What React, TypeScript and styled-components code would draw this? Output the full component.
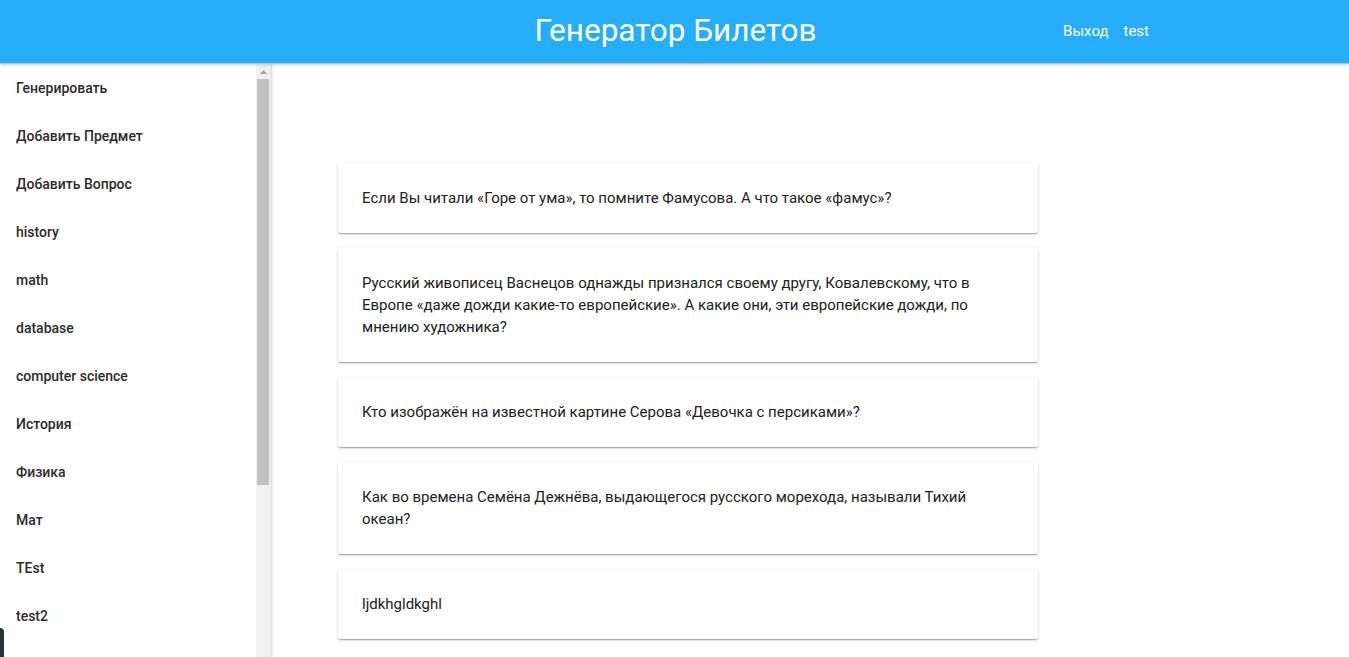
import React from "react";
import styled, { createGlobalStyle } from "styled-components";

const GlobalStyle = createGlobalStyle`
  html, body { margin: 0; padding: 0; height: 100%; overflow: hidden; }
  body { font-family: Roboto, "Noto Sans", Arial, sans-serif; background: #fff; }
  #root { height: 100%; }
  * { box-sizing: border-box; }
`;

const Page = styled.div`
  display: flex;
  flex-direction: column;
  height: 100vh;
  position: relative;
`;

const Header = styled.header`
  height: 64px;
  flex: 0 0 64px;
  background: #25aef7;
  border-bottom: 1px solid #b9c3c9;
  display: grid;
  grid-template-columns: 1fr auto 1fr;
  align-items: center;
  padding-bottom: 2px;
  box-shadow: 0 1px 3px rgba(0, 0, 0, 0.18);
  position: relative;
  z-index: 2;
`;

const Title = styled.h1`
  grid-column: 2;
  margin: 0;
  color: #fff;
  font-size: 31.5px;
  font-weight: 400;
  transform: translateX(1px);
`;

const Nav = styled.nav`
  grid-column: 3;
  display: flex;
  justify-content: flex-end;
  gap: 15px;
  padding-right: 200px;
`;

const NavLink = styled.a`
  color: #fff;
  font-size: 15px;
  text-decoration: none;
`;

const Body = styled.div`
  display: flex;
  flex: 1;
  min-height: 0;
`;

const Sidebar = styled.aside`
  width: 272px;
  flex: 0 0 272px;
  height: 100%;
  display: flex;
  background: #fff;
  border-right: 1px solid #e4e4e4;
  box-shadow: 1px 0 2px rgba(0, 0, 0, 0.08);
  position: relative;
  z-index: 1;
  overflow: hidden;
`;

const Menu = styled.ul`
  list-style: none;
  margin: 0;
  padding: 0;
  flex: 1;
`;

const MenuItem = styled.li`
  height: 48px;
  display: flex;
  align-items: center;
  padding-left: 16px;
  font-size: 14px;
  font-weight: 500;
  color: #2b2b2b;
`;

const ScrollTrack = styled.div`
  width: 15px;
  flex: 0 0 15px;
  background: #f1f1f1;
  display: flex;
  flex-direction: column;
  align-items: center;
  border-right: 1px solid #e6e6e6;
`;

const ScrollButton = styled.div`
  height: 15px;
  width: 100%;
  display: flex;
  align-items: center;
  justify-content: center;
`;

const ScrollThumb = styled.div`
  width: 12px;
  height: 406px;
  background: #c1c1c1;
`;

const Main = styled.main`
  flex: 1;
  overflow: hidden;
  padding: 99px 0 0 66px;
`;

const CardList = styled.div`
  width: 700px;
  display: flex;
  flex-direction: column;
  gap: 15px;
`;

const Card = styled.div`
  background: #fff;
  border-radius: 2px;
  padding: 24px;
  font-size: 15px;
  line-height: 22px;
  color: #212121;
  box-shadow: 0 1px 3px rgba(0, 0, 0, 0.2), 0 1px 1px rgba(0, 0, 0, 0.14), 0 2px 1px -1px rgba(0, 0, 0, 0.12);
`;

const CornerTab = styled.div`
  position: absolute;
  left: 0;
  bottom: 0;
  width: 4px;
  height: 29px;
  background: #263238;
  border-top-right-radius: 4px;
  z-index: 3;
`;

const menu = [
  "Генерировать",
  "Добавить Предмет",
  "Добавить Вопрос",
  "history",
  "math",
  "database",
  "computer science",
  "История",
  "Физика",
  "Мат",
  "TEst",
  "test2",
];

const questions = [
  "Если Вы читали «Горе от ума», то помните Фамусова. А что такое «фамус»?",
  "Русский живописец Васнецов однажды признался своему другу, Ковалевскому, что в Европе «даже дожди какие-то европейские». А какие они, эти европейские дожди, по мнению художника?",
  "Кто изображён на известной картине Серова «Девочка с персиками»?",
  "Как во времена Семёна Дежнёва, выдающегося русского морехода, называли Тихий океан?",
  "ljdkhgldkghl",
];

export default function App() {
  return (
    <>
      <GlobalStyle />
      <Page>
        <Header>
          <Title>Генератор Билетов</Title>
          <Nav>
            <NavLink href="#">Выход</NavLink>
            <NavLink href="#">test</NavLink>
          </Nav>
        </Header>
        <Body>
          <Sidebar>
            <Menu>
              {menu.map((m) => (
                <MenuItem key={m}>{m}</MenuItem>
              ))}
            </Menu>
            <ScrollTrack>
              <ScrollButton>
                <svg width="7" height="4" viewBox="0 0 7 4">
                  <path d="M0 4 L3.5 0 L7 4 Z" fill="#a3a3a3" />
                </svg>
              </ScrollButton>
              <ScrollThumb />
            </ScrollTrack>
          </Sidebar>
          <Main>
            <CardList>
              {questions.map((q) => (
                <Card key={q}>{q}</Card>
              ))}
            </CardList>
          </Main>
        </Body>
        <CornerTab />
      </Page>
    </>
  );
}
